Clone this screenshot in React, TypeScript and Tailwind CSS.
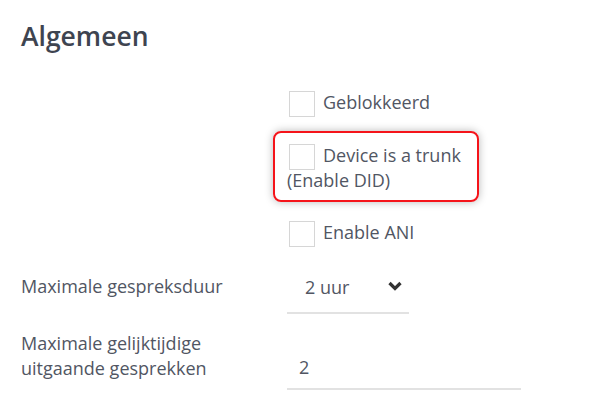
import React from "react";

const font = { fontFamily: '"Open Sans", "Noto Sans", sans-serif' };

function Box() {
  return (
    <span className="inline-block align-middle w-[26px] h-[26px] -my-[3px] ml-[2px] mr-[8px] border border-[#d6d6d6] bg-white" />
  );
}

export default function App() {
  return (
    <div
      className="w-[605px] h-[414px] bg-white pl-[21px] text-[18px] leading-[25px] text-[#515663]"
      style={font}
    >
      <h1 className="pt-[18px] text-[26.5px] leading-[36px] font-semibold text-[#3e4450]">
        Algemeen
      </h1>

      <div className="flex mt-[36px]">
        <div className="w-[266px] shrink-0" />
        <div className="flex flex-col">
          <div className="w-[185px]">
            <Box />
            Geblokkeerd
          </div>

          <div className="relative w-[185px] mt-[28px]">
            <div className="absolute -left-[14px] -top-[12px] w-[206px] h-[71px] rounded-[8px] border-2 border-[#f5141a] shadow-[0_0_8px_rgba(0,0,0,0.28)]" />
            <div className="relative">
              <Box />
              Device is a trunk (Enable DID)
            </div>
          </div>

          <div className="w-[185px] mt-[27px]">
            <Box />
            Enable ANI
          </div>
        </div>
      </div>

      <div className="flex mt-[29px]">
        <div className="w-[266px] shrink-0">Maximale gespreksduur</div>
        <div className="w-[122px] flex items-center justify-between pl-[18px] pr-[6px] pb-[12px] border-b-2 border-[#e2e2e2] mt-[1px]">
          <span>2 uur</span>
          <svg width="16" height="10" viewBox="0 0 16 10" className="mt-[-4px]">
            <path d="M2.5 2 L8 7.5 L13.5 2" fill="none" stroke="#333" strokeWidth="3.2" />
          </svg>
        </div>
      </div>

      <div className="flex mt-[17px] leading-[24.5px]">
        <div className="w-[266px] shrink-0">
          Maximale gelijktijdige
          <br />
          uitgaande gesprekken
        </div>
        <div className="w-[234px] self-end pl-[12px] pb-[9px] border-b-2 border-[#e2e2e2] mb-[-10px]">
          2
        </div>
      </div>
    </div>
  );
}
